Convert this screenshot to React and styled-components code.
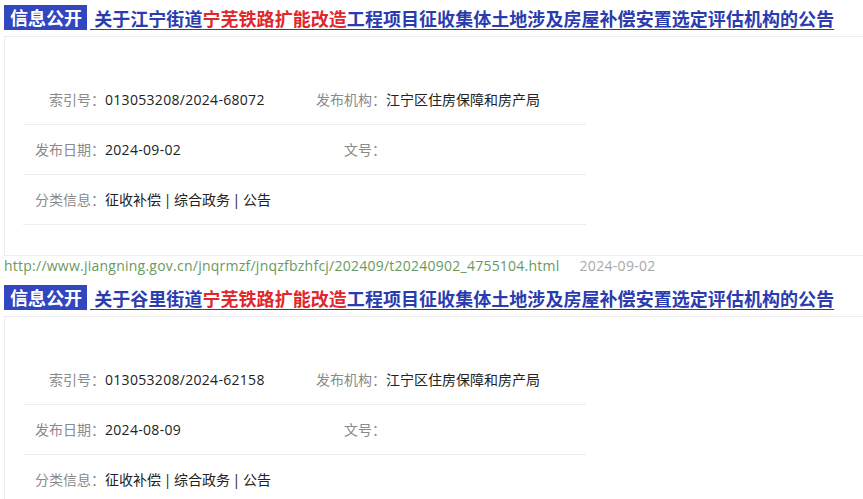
import React from "react";
import styled, { createGlobalStyle } from "styled-components";

const GlobalStyle = createGlobalStyle`
  body {
    margin: 0;
    background: #fff;
    font-family: "Open Sans", "Noto Sans CJK SC", sans-serif;
    overflow-x: hidden;
  }
`;

const Item = styled.div`
  display: flex;
  flex-direction: column;
`;

const Header = styled.div`
  height: 36px;
  display: flex;
  align-items: center;
  padding-left: 4px;
  padding-bottom: 1px;
  box-sizing: border-box;
  white-space: nowrap;
`;

const Badge = styled.span`
  background: #3246bf;
  color: #fff;
  font-family: "Noto Sans CJK SC", sans-serif;
  font-size: 18px;
  font-weight: bold;
  line-height: 25px;
  height: 25px;
  padding: 0 5px 0 6px;
`;

const Title = styled.a`
  color: #2b3bb0;
  font-family: "Noto Sans CJK SC", sans-serif;
  font-size: 18px;
  font-weight: bold;
  text-decoration: underline;
  text-underline-offset: 3px;
  margin-left: 3px;
  letter-spacing: 0.05px;

  em {
    font-style: normal;
    color: #e2262c;
  }
`;

const Card = styled.div`
  margin-left: 4px;
  border: 1px solid #ececec;
  border-right: none;
  padding: 38px 0 30px 18px;
`;

const Row = styled.div`
  width: 563px;
  height: 49px;
  display: grid;
  grid-template-columns: 82px 199px 82px 1fr;
  align-items: center;
  border-bottom: 1px solid #ececec;
  font-size: 14px;
  line-height: 20px;
`;

const Label = styled.span`
  color: #8a8a8a;
  text-align: right;
`;

const Value = styled.span`
  color: #222;
  white-space: nowrap;
  word-spacing: -1px;
  letter-spacing: ${(p) => (p.$latin ? "0.3px" : "0")};
`;

const Source = styled.div`
  height: 24px;
  display: flex;
  align-items: flex-start;
  padding-left: 4px;
  font-size: 14px;
  line-height: 20px;
  white-space: nowrap;
`;

const Url = styled.span`
  color: #6b9860;
  letter-spacing: 0.24px;
`;

const SourceDate = styled.span`
  color: #a8a8a8;
  margin-left: 20px;
  letter-spacing: 0.3px;
`;

const items = [
  {
    street: "关于江宁街道",
    index: "013053208/2024-68072",
    date: "2024-09-02",
    url: "http://www.jiangning.gov.cn/jnqrmzf/jnqzfbzhfcj/202409/t20240902_4755104.html",
  },
  {
    street: "关于谷里街道",
    index: "013053208/2024-62158",
    date: "2024-08-09",
    url: null,
  },
];

function Notice({ data }) {
  return (
    <Item>
      <Header>
        <Badge>信息公开</Badge>
        <Title href="#">
          {"\u00a0"}
          {data.street}
          <em>宁芜铁路扩能改造</em>
          工程项目征收集体土地涉及房屋补偿安置选定评估机构的公告
        </Title>
      </Header>
      <Card>
        <Row>
          <Label>索引号：</Label>
          <Value $latin>{data.index}</Value>
          <Label>发布机构：</Label>
          <Value>江宁区住房保障和房产局</Value>
        </Row>
        <Row>
          <Label>发布日期：</Label>
          <Value $latin>{data.date}</Value>
          <Label>文号：</Label>
          <Value></Value>
        </Row>
        <Row>
          <Label>分类信息：</Label>
          <Value>征收补偿 | 综合政务 | 公告</Value>
          <span />
          <span />
        </Row>
      </Card>
      {data.url && (
        <Source>
          <Url>{data.url}</Url>
          <SourceDate>{data.date}</SourceDate>
        </Source>
      )}
    </Item>
  );
}

export default function App() {
  return (
    <>
      <GlobalStyle />
      {items.map((it, i) => (
        <Notice key={i} data={it} />
      ))}
    </>
  );
}
